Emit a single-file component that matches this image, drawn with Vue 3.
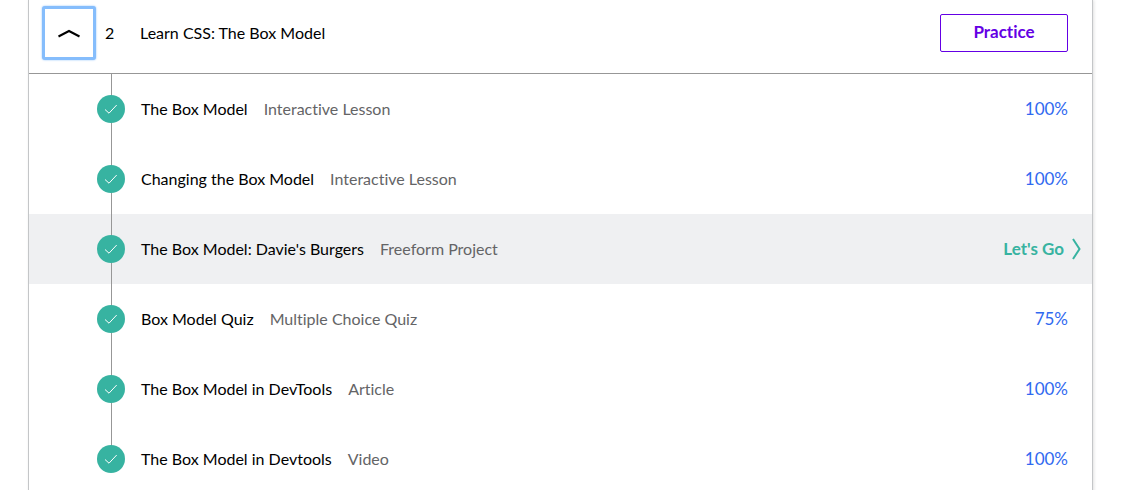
<script setup>
import { ref } from 'vue'

const open = ref(true)

const items = [
  { title: 'The Box Model', kind: 'Interactive Lesson', score: '100%' },
  { title: 'Changing the Box Model', kind: 'Interactive Lesson', score: '100%' },
  { title: "The Box Model: Davie's Burgers", kind: 'Freeform Project', active: true },
  { title: 'Box Model Quiz', kind: 'Multiple Choice Quiz', score: '75%' },
  { title: 'The Box Model in DevTools', kind: 'Article', score: '100%' },
  { title: 'The Box Model in Devtools', kind: 'Video', score: '100%' },
]
</script>

<template>
  <main class="page">
    <section class="card">
      <header class="head">
        <button
          class="toggle"
          type="button"
          aria-label="Toggle module"
          :aria-expanded="open"
          @click="open = !open"
        >
          <svg width="24" height="12" viewBox="0 0 24 12" aria-hidden="true">
            <path d="M1.5 9.5 12 4l10.500 5.500" fill="none" stroke="#000" stroke-width="2" />
          </svg>
        </button>
        <span class="number">2</span>
        <h2 class="name">Learn CSS: The Box Model</h2>
        <button class="practice" type="button">Practice</button>
      </header>

      <ul v-if="open" class="list">
        <li v-for="item in items" :key="item.title" class="row" :class="{ active: item.active }">
          <span class="rail">
            <span class="dot">
              <svg width="14" height="12" viewBox="0 0 14 12" aria-hidden="true">
                <path d="M1 6.500 5 10.200 12.700 2" fill="none" stroke="#fff" stroke-width="1" />
              </svg>
            </span>
          </span>
          <a class="title" href="#">{{ item.title }}</a>
          <span class="kind">{{ item.kind }}</span>
          <a v-if="item.active" class="go" href="#">
            Let's Go
            <svg width="10" height="24" viewBox="0 0 10 24" aria-hidden="true">
              <path d="M1 2 7.500 12 1 22" fill="none" stroke="#37b3a1" stroke-width="2" />
            </svg>
          </a>
          <span v-else class="score">{{ item.score }}</span>
        </li>
      </ul>
    </section>
  </main>
</template>

<style>
body {
  background: #fff;
}
</style>

<style scoped>
.page {
  box-sizing: border-box;
  height: 100vh;
  overflow: hidden;
  padding: 0 31px 0 28px;
  font-family: Lato, "Open Sans", sans-serif;
  font-size: 16px;
  font-variant-ligatures: none;
  line-height: 24px;
  color: #000;
}

.card {
  min-height: 100%;
  border: solid #c4c6c8;
  border-width: 0 1px;
  box-shadow: 1px 0 3px rgba(0, 0, 0, 0.12);
}

.head {
  display: flex;
  align-items: center;
  padding: 7px 24px 14px 14px;
  border-bottom: 1px solid #979797;
}

.toggle {
  display: flex;
  align-items: center;
  justify-content: center;
  width: 52px;
  height: 52px;
  padding: 0;
  border: 2px solid #85bdfc;
  border-radius: 2px;
  background: #fff;
  box-shadow: 0 0 0 1px #85bdfc, 0 0 2px 1px #85bdfc;
  cursor: pointer;
}

.number {
  width: 35px;
  padding-left: 10px;
}

.name {
  flex: 1;
  margin: 0;
  font-size: inherit;
  font-weight: 400;
}

.practice {
  width: 128px;
  height: 38px;
  padding: 0 0 2px;
  border: 1px solid #6400e4;
  border-radius: 2px;
  background: #fff;
  color: #6400e4;
  font: inherit;
  font-size: 17px;
  font-weight: 700;
  font-variant-ligatures: none;
  cursor: pointer;
}

.list {
  margin: 0;
  padding: 0;
  list-style: none;
}

.row {
  display: flex;
  align-items: center;
  height: 70px;
  padding: 0 24px 0 68px;
}

.row.active {
  padding-right: 10px;
  background: #eff0f2;
}

.rail {
  display: flex;
  align-items: center;
  align-self: stretch;
  width: 28px;
  background: linear-gradient(#979797, #979797) 14px 0 / 1px 100% no-repeat;
}

.row:last-child .rail {
  background-size: 1px 50%;
}

.dot {
  display: flex;
  align-items: center;
  justify-content: center;
  width: 28px;
  height: 28px;
  border-radius: 50%;
  background: #37b3a1;
}

.title {
  margin: 0 16px;
  color: #000;
  text-decoration: none;
}

.kind {
  color: #646466;
}

.score {
  margin-left: auto;
  color: #3069f0;
  font-size: 17px;
}

.go {
  display: flex;
  align-items: center;
  gap: 8px;
  margin-left: auto;
  color: #37b3a1;
  font-size: 17px;
  font-weight: 700;
  text-decoration: none;
}
</style>
